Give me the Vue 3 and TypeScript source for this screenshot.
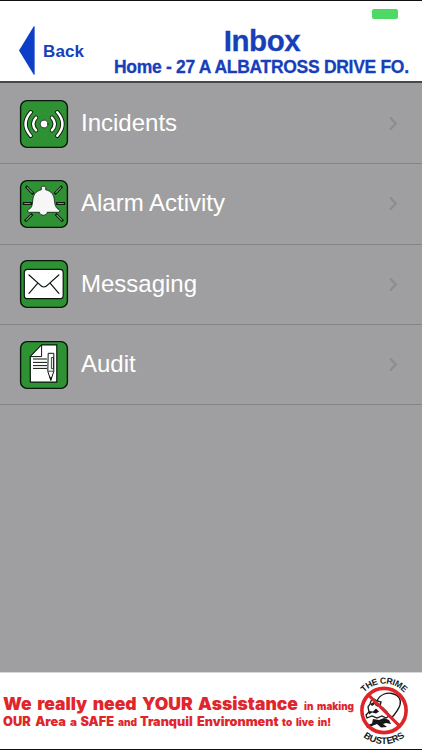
<script setup lang="ts">
import { ref } from 'vue'

interface InboxItem {
  icon: 'incidents' | 'alarm' | 'messaging' | 'audit'
  label: string
}

const title = ref('Inbox')
const address = ref('Home - 27 A ALBATROSS DRIVE FO.')

const items: InboxItem[] = [
  { icon: 'incidents', label: 'Incidents' },
  { icon: 'alarm', label: 'Alarm Activity' },
  { icon: 'messaging', label: 'Messaging' },
  { icon: 'audit', label: 'Audit' },
]
</script>

<template>
  <div class="screen">
    <header class="header">
      <button class="header__back">
        <svg class="header__arrow" width="16" height="49" viewBox="0 0 16 49">
          <path d="M15.6.3v48.4h-.8L0 24.5 14.8.3z" fill="#0d3ec8" />
        </svg>
        <span class="header__back-label">Back</span>
      </button>
      <div class="header__titles">
        <h1 class="header__title">{{ title }}</h1>
        <p class="header__address">{{ address }}</p>
      </div>
      <span class="header__battery" />
    </header>

    <main class="list">
      <div v-for="item in items" :key="item.icon" class="row">
        <svg class="row__icon" width="50" height="50" viewBox="0 0 50 50">
          <rect x="1.6" y="1.6" width="46.8" height="46.8" rx="6.5" fill="#2e9134" stroke="#0b160c" stroke-width="1.4" />

          <!-- Broadcast waves -->
          <g v-if="item.icon === 'incidents'" fill="none" stroke-linecap="round">
            <g stroke="#0b160c" stroke-width="4.2">
              <path d="M11.7 13.2Q1.4 25 11.7 36.8M17.1 18.7Q11.3 25 17.1 31.3M38.3 13.2Q48.6 25 38.3 36.8M32.9 18.7Q38.7 25 32.9 31.3" />
            </g>
            <g stroke="#fff" stroke-width="2.5">
              <path d="M11.7 13.2Q1.4 25 11.7 36.8M17.1 18.7Q11.3 25 17.1 31.3M38.3 13.2Q48.6 25 38.3 36.8M32.9 18.7Q38.7 25 32.9 31.3" />
            </g>
            <circle cx="25" cy="25" r="3.9" fill="#fff" stroke="#0b160c" stroke-width=".8" />
          </g>

          <!-- Ringing bell -->
          <g v-else-if="item.icon === 'alarm'">
            <path d="M7.8 8.2l5.7 5.7M42.2 8.2l-5.7 5.7M5.2 24.5h6.3M44.8 24.5h-6.3M7 41.3l5.4-5.4M43 41.3l-5.4-5.4" stroke="#0b160c" stroke-width="2.8" stroke-linecap="square" />
            <path d="M7.8 8.2l5.7 5.7M42.2 8.2l-5.7 5.7M5.2 24.5h6.3M44.8 24.5h-6.3M7 41.3l5.4-5.4M43 41.3l-5.4-5.4" stroke="#7b9b7a" stroke-width="1.2" />
            <path d="M22.3 10.8V8.5q0-1.2 1.3-1.2h1.8q1.3 0 1.3 1.2v2.3c5.7 1.3 8.3 4.7 8.8 11 .4 5 1.8 7.7 4.5 8.8 1.2.6.9 2.7-.7 2.7H28.2c-.4 3.9-7.3 3.9-7.7 0H10.2c-1.8 0-2-2-.7-2.7 3-1.3 3.9-4 4.2-8.8.5-6.3 3.1-9.7 8.6-11z" fill="#f6f6f6" stroke="#0b160c" stroke-width=".8" />
          </g>

          <!-- Envelope -->
          <g v-else-if="item.icon === 'messaging'" stroke="#0b160c">
            <rect x="5.3" y="10.4" width="38.9" height="29.3" rx="3.3" fill="#fff" stroke-width="1.2" />
            <path d="M10 16l10.5 9.4q4.3 5.2 8.8 0L39.8 16M18.6 24.4l-8.6 9.9M31.3 24.4l8.6 9.9" fill="none" stroke-width="1.2" stroke-linecap="round" />
          </g>

          <!-- Report sheet with pencil -->
          <g v-else stroke="#0b160c" stroke-linejoin="round">
            <path d="M22.6 4.9h15.2v37.2H11.3V16.6z" fill="#fff" stroke-width="1.2" />
            <path d="M22.6 4.9v11.7H11.3z" fill="#fff" stroke-width="1" />
            <path d="M14 19h14M14 22.4h14M14 25.6h14M14 28.4h14" stroke-width="1" />
            <path d="M29.2 13.3h5.6v18.1l-3 9-3-9z" fill="#fff" stroke-width="1" />
            <path d="M32.4 17.5h2v11.2h-2zM29 31.2h5.8" fill="none" stroke-width=".8" />
            <path d="M30.9 37.2h1.8l-.9 3.1z" fill="#0b160c" stroke-width=".5" />
          </g>
        </svg>

        <span class="row__label">{{ item.label }}</span>

        <svg class="row__chevron" width="9" height="15" viewBox="0 0 9 15">
          <path d="M1.2 1.4l5.6 6.1-5.6 6.1" fill="none" stroke="#8c8c8f" stroke-width="2.2" />
        </svg>
      </div>
    </main>

    <footer class="banner">
      <svg width="422" height="76" viewBox="0 0 422 76">
        <g class="banner__text">
          <text x="3" y="37.2" font-size="17.8" textLength="295" lengthAdjust="spacingAndGlyphs">We really need YOUR Assistance</text>
          <text x="304" y="37.2" font-size="10.4" textLength="50" lengthAdjust="spacingAndGlyphs">in making</text>
          <text x="3" y="52.5" font-size="12.8" textLength="63" lengthAdjust="spacingAndGlyphs">OUR Area</text>
          <text x="70" y="52.5" font-size="10.4" textLength="7" lengthAdjust="spacingAndGlyphs">a</text>
          <text x="80.5" y="52.5" font-size="12.8" textLength="33.5" lengthAdjust="spacingAndGlyphs">SAFE</text>
          <text x="118" y="52.5" font-size="10.4" textLength="19" lengthAdjust="spacingAndGlyphs">and</text>
          <text x="140" y="52.5" font-size="12.8" textLength="138.5" lengthAdjust="spacingAndGlyphs">Tranquil Environment</text>
          <text x="282" y="52.5" font-size="10.4" textLength="49" lengthAdjust="spacingAndGlyphs">to live in!</text>
        </g>

        <defs>
          <path id="arc-top" d="M357.2 37.5A26.8 26.8 0 0 1 410.8 37.5" />
          <path id="arc-bottom" d="M350.5 37.5A33.5 33.5 0 0 0 417.5 37.5" />
        </defs>

        <!-- Burglar with a sack -->
        <path d="M377 28C380 21 387 19.5 392 20.5C399 22 401.5 27 400 32C398.5 37 395 41 391.5 45L387 42" fill="#fff" stroke="#171717" stroke-width="1.3" />
        <path d="M371 28l3-2 3 2 4 1-1 4 3 2 4 4 2 4-3 2-4-2-5 2-5-2-5 2-1-3 3-3-1-5 2-3z" fill="#fff" stroke="#171717" stroke-width="1.3" />
        <path d="M370 31l4-2 1 2-3 2zM376 29l4 2-2 3-3-2zM369 38l4 .5 3-3 3 3-3 2-4-1-3 2z" fill="#171717" />
        <path d="M373 46l6 1 5-2 5 2 2 4-5-1-3 1 4 3-6 .5-4-3.5-5 2-5 2-1-2.5 6-2z" fill="#171717" />

        <circle cx="384" cy="37.5" r="22.1" fill="none" stroke="#df2429" stroke-width="3.6" />
        <path d="M368.6 22.1l30.8 30.8" stroke="#df2429" stroke-width="3" />

        <g class="banner__ring">
          <text class="banner__ring-top">
            <textPath href="#arc-top" startOffset="50%" text-anchor="middle">THE CRIME</textPath>
          </text>
          <text>
            <textPath href="#arc-bottom" startOffset="50%" text-anchor="middle">BUSTERS</textPath>
          </text>
        </g>
      </svg>
    </footer>
  </div>
</template>

<style>
body {
  margin: 0;
}
</style>

<style scoped>
.screen {
  display: flex;
  flex-direction: column;
  box-sizing: border-box;
  width: 422px;
  height: 750px;
  overflow: hidden;
  border-top: 1px solid #111;
  background: #9f9fa1;
  font-family: "Liberation Sans", Arial, sans-serif;
}

/* ── Header ─────────────────────────────────────── */
.header {
  position: relative;
  display: flex;
  box-sizing: border-box;
  flex: none;
  height: 82px;
  padding: 0 12px 0 19px;
  border-bottom: 2px solid #48484c;
  background: #fff;
  color: #173fba;
}

.header__back {
  display: flex;
  align-items: center;
  flex: none;
  width: 95px;
  height: 49px;
  margin-top: 25px;
  padding: 0;
  border: 0;
  background: none;
  color: inherit;
  font-family: inherit;
}

.header__back-label {
  margin: 3px 0 0 8px;
  font-size: 17px;
  font-weight: 700;
  letter-spacing: 0.1px;
}

.header__titles {
  width: 296px;
  text-align: center;
}

.header__title {
  margin: 23px 0 0;
  font-size: 29.5px;
  font-weight: 700;
  line-height: 34px;
  letter-spacing: -0.4px;
  -webkit-text-stroke: 0.3px #173fba;
}

.header__address {
  margin: -1px 0 0;
  font-size: 17.5px;
  font-weight: 700;
  line-height: 21px;
  letter-spacing: -0.3px;
  text-align: left;
  white-space: nowrap;
  -webkit-text-stroke: 0.3px #173fba;
}

.header__battery {
  position: absolute;
  top: 8px;
  right: 24px;
  width: 26px;
  height: 10px;
  border-radius: 2px;
  background: #4cd964;
}

/* ── List ───────────────────────────────────────── */
.list {
  flex: 1;
  padding-top: 1px;
}

.row {
  display: flex;
  align-items: center;
  box-sizing: border-box;
  height: 80.3px;
  padding: 0 24px 0 19px;
  border-bottom: 1px solid #848487;
}

.row__icon {
  flex: none;
}

.row__label {
  flex: 1;
  margin: -1px 0 0 12px;
  color: #fff;
  font-size: 24px;
  line-height: 28px;
}

.row__chevron {
  flex: none;
}

/* ── Banner ─────────────────────────────────────── */
.banner {
  flex: none;
  height: 76px;
  border-top: 1px solid #d8d8d8;
  border-bottom: 1px solid #111;
  background: #fff;
}

.banner svg {
  display: block;
}

.banner__text {
  fill: #e0262b;
  font-family: Inter, "Liberation Sans", sans-serif;
  font-weight: 900;
  word-spacing: 0.12em;
}

.banner__ring {
  fill: #171717;
  font-size: 9.4px;
  font-weight: 700;
}

.banner__ring-top {
  font-size: 8.8px;
  letter-spacing: -0.4px;
}
</style>
